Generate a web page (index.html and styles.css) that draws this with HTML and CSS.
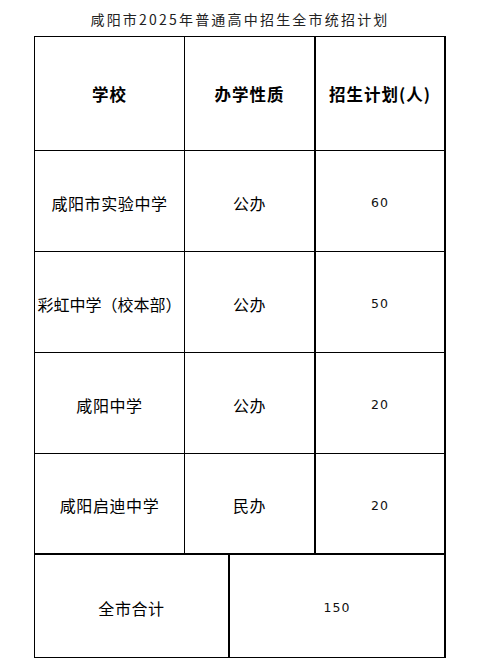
FILE: index.html
```html
<!DOCTYPE html>
<html lang="zh-CN">
<head>
<meta charset="utf-8">
<title>咸阳市2025年普通高中招生全市统招计划</title>
<link rel="stylesheet" href="styles.css">
</head>
<body>
<div class="page">
  <div class="title">咸阳市2025年普通高中招生全市统招计划</div>
  <div class="sheet">
    <div class="row head">
      <div class="cell c1">学校</div>
      <div class="cell c2">办学性质</div>
      <div class="cell c3">招生计划(人)</div>
    </div>
    <div class="row body">
      <div class="cell c1">咸阳市实验中学</div>
      <div class="cell c2">公办</div>
      <div class="cell c3 num">60</div>
    </div>
    <div class="row body">
      <div class="cell c1 wide">彩虹中学（校本部）</div>
      <div class="cell c2">公办</div>
      <div class="cell c3 num">50</div>
    </div>
    <div class="row body">
      <div class="cell c1">咸阳中学</div>
      <div class="cell c2">公办</div>
      <div class="cell c3 num">20</div>
    </div>
    <div class="row body last">
      <div class="cell c1">咸阳启迪中学</div>
      <div class="cell c2">民办</div>
      <div class="cell c3 num">20</div>
    </div>
    <div class="row foot">
      <div class="cell f1">全市合计</div>
      <div class="cell f2 num">150</div>
    </div>
  </div>
</div>
</body>
</html>
```
FILE: styles.css
```css
html, body {
  margin: 0;
  padding: 0;
  background: #ffffff;
}
body {
  font-family: "Noto Sans CJK SC", "DejaVu Sans", sans-serif;
  color: #000;
}
.page {
  width: 480px;
  height: 668px;
}
.title {
  height: 34px;
  padding-top: 2px;
  display: flex;
  align-items: center;
  justify-content: center;
  font-size: 14px;
  letter-spacing: 2.2px;
  color: #222;
}
.sheet {
  margin-left: 34px;
  width: 412px;
  box-sizing: border-box;
  border-top: 1px solid #000;
  border-left: 1px solid #000;
  border-right: 2px solid #000;
  border-bottom: 1px solid #000;
}
.row {
  display: grid;
  grid-template-columns: 150px 131px 128px;
  border-bottom: 1px solid #000;
}
.row.head { height: 113px; }
.row.body { height: 100px; }
.row.last { height: 99px; border-bottom: 2px solid #000; }
.row.foot {
  height: 102px;
  border-bottom: none;
  grid-template-columns: 195px 214px;
}
.cell {
  display: flex;
  align-items: center;
  justify-content: center;
  font-size: 16px;
  letter-spacing: 0.6px;
  white-space: nowrap;
}
.c1 { border-right: 1px solid #000; }
.c2 { border-right: 2px solid #000; }
.f1 { border-right: 2px solid #000; }
.wide { letter-spacing: 0; }
.head .cell {
  font-weight: bold;
  font-size: 16.5px;
  letter-spacing: 1px;
  padding-top: 1px;
}
.body .cell, .foot .cell {
  padding-top: 3px;
}
.num {
  font-family: "DejaVu Sans", sans-serif;
  font-size: 12.5px;
  letter-spacing: 1px;
  color: #111;
}
```
